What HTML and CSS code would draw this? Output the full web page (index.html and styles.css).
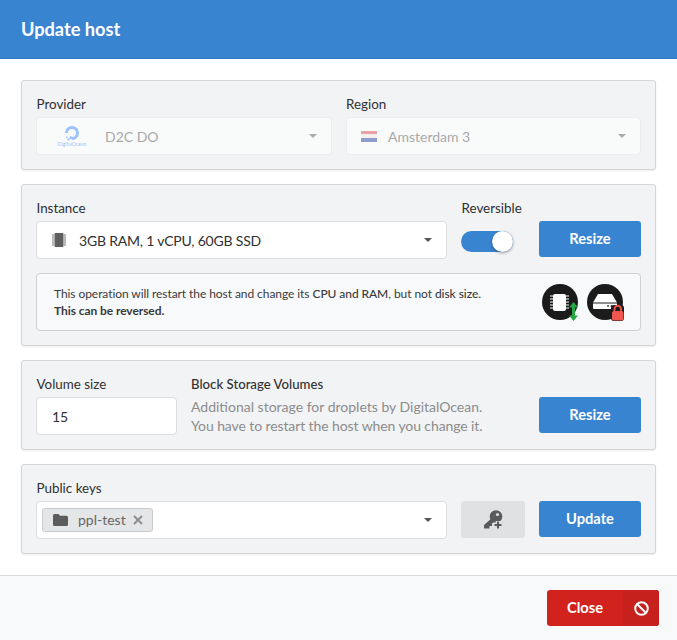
FILE: index.html
```html
<!DOCTYPE html>
<html lang="en">
<head>
    <meta charset="UTF-8">
    <meta name="viewport" content="width=device-width, initial-scale=1.0">
    <title>Update host</title>
    <link rel="stylesheet" href="styles.css">
</head>
<body>
    <header class="modal-header">
        <h1>Update host</h1>
    </header>
    <main class="modal-body">
        <section class="panel two-cols">
            <div class="field">
                <label>Provider</label>
                <div class="select disabled">
                    <span class="do-logo">
                        <svg width="16" height="16" viewBox="0 0 16 16"><path d="M8 15v-3a4 4 0 1 0-4-4H1a7 7 0 1 1 7 7z" fill="#3f8cff"/><rect x="5.500" y="11.500" width="2.500" height="2.500" fill="#3f8cff"/><rect x="3.500" y="13.500" width="2" height="2" fill="#3f8cff"/><rect x="2" y="11.500" width="1.500" height="1.500" fill="#3f8cff"/></svg>
                        <small>DigitalOcean</small>
                    </span>
                    <span class="select-text">D2C DO</span>
                    <span class="caret"></span>
                </div>
            </div>
            <div class="field">
                <label class="flush">Region</label>
                <div class="select disabled">
                    <span class="flag"><i class="red"></i><i class="white"></i><i class="blue"></i></span>
                    <span class="select-text">Amsterdam 3</span>
                    <span class="caret"></span>
                </div>
            </div>
        </section>

        <section class="panel">
            <div class="row">
                <div class="field grow">
                    <label>Instance</label>
                    <div class="select">
                        <svg class="chip" width="16" height="16" viewBox="0 0 16 16"><rect x="3.500" y="1" width="9" height="14" rx="1" fill="#5f5f5f"/><path d="M1 3h2M1 5h2M1 7h2M1 9h2M1 11h2M1 13h2M13 3h2M13 5h2M13 7h2M13 9h2M13 11h2M13 13h2" stroke="#777" stroke-width="1"/></svg>
                        <span class="select-text tight">3GB RAM, 1 vCPU, 60GB SSD</span>
                        <span class="caret"></span>
                    </div>
                </div>
                <div class="field toggle-field">
                    <label>Reversible</label>
                    <div class="toggle"><span class="knob"></span></div>
                </div>
                <button class="btn">Resize</button>
            </div>
            <div class="notice">
                <p>This operation will restart the host and change its <b class="medium">CPU and RAM</b>, but not <b class="medium">disk size</b>.<br><b>This can be reversed.</b></p>
                <div class="notice-icons">
                    <svg width="37" height="37" viewBox="0 0 37 37">
                        <circle cx="18" cy="18" r="18" fill="#1b1b1b"/>
                        <rect x="11" y="10" width="13" height="17" rx="2" fill="#fff"/>
                        <path d="M8 12h3M8 15h3M8 18h3M8 21h3M8 24h3M24 12h3M24 15h3M24 18h3M24 21h3M24 24h3" stroke="#fff" stroke-width="1.200"/>
                        <path d="M31.500 18l4.500 5.500h-3v8h3l-4.500 5.500-4.500-5.500h3v-8h-3z" fill="#27a844"/>
                    </svg>
                    <svg width="37" height="37" viewBox="0 0 37 37">
                        <circle cx="18" cy="18" r="18" fill="#1b1b1b"/>
                        <path d="M11 10h14l5 8.500H6z" fill="#fff"/>
                        <path d="M6 19.500h24V24a1 1 0 0 1-1 1H7a1 1 0 0 1-1-1z" fill="#fff"/>
                        <circle cx="21" cy="22" r=".9" fill="#333"/>
                        <circle cx="24.500" cy="22" r=".9" fill="#333"/>
                        <rect x="24" y="21" width="13" height="16" rx="3" fill="#1b1b1b"/>
                        <rect x="25" y="27" width="11.500" height="9.500" rx="2" fill="#f0554e"/>
                        <path d="M27.500 27.500v-2.500a3.200 3.200 0 0 1 6.500 0v2.500" fill="none" stroke="#f0554e" stroke-width="1.800"/>
                    </svg>
                </div>
            </div>
        </section>

        <section class="panel">
            <div class="row">
                <div class="field volume-field">
                    <label>Volume size</label>
                    <input class="input" type="text" value="15">
                </div>
                <div class="volume-info">
                    <h2>Block Storage Volumes</h2>
                    <p>Additional storage for droplets by DigitalOcean.<br><span class="tighter">You have to restart the host when you change it.</span></p>
                </div>
                <button class="btn">Resize</button>
            </div>
        </section>

        <section class="panel">
            <div class="row">
                <div class="field grow">
                    <label>Public keys</label>
                    <div class="select tags">
                        <span class="tag">
                            <svg width="15" height="12" viewBox="0 0 15 12"><path d="M1.500 0h4l1.500 1.800h6.500A1.500 1.500 0 0 1 15 3.300v7.200a1.500 1.500 0 0 1-1.500 1.500h-12A1.500 1.500 0 0 1 0 10.500v-9A1.500 1.500 0 0 1 1.500 0z" fill="#5c5c5c"/></svg>
                            <span class="tag-text">ppl-test</span>
                            <svg class="tag-x" width="10" height="10" viewBox="0 0 10 10"><path d="M1 1l8 8M9 1l-8 8" stroke="#8e8e8e" stroke-width="2"/></svg>
                        </span>
                        <span class="caret"></span>
                    </div>
                </div>
                <button class="btn-key" aria-label="Add key">
                    <svg width="20" height="20" viewBox="0 0 20 20">
                        <circle cx="13" cy="6.500" r="6.300" fill="#5a5a5a"/>
                        <path d="M9 8L1 15v3.500h5.500V16h2.500v-2.500L12 11z" fill="#5a5a5a"/>
                        <circle cx="14.500" cy="4.500" r="1.600" fill="#e0e1e3"/>
                        <path d="M15 11v8M11 15h8" stroke="#e0e1e3" stroke-width="4.500"/>
                        <path d="M15 11.500v7M11.500 15h7" stroke="#5a5a5a" stroke-width="2"/>
                    </svg>
                </button>
                <button class="btn">Update</button>
            </div>
        </section>
    </main>
    <footer class="modal-footer">
        <button class="btn-close">
            <span class="close-label">Close</span>
            <span class="close-icon">
                <svg width="15" height="15" viewBox="0 0 15 15"><circle cx="7.500" cy="7.500" r="6.300" fill="none" stroke="#fff" stroke-width="2"/><path d="M3 3l9 9" stroke="#fff" stroke-width="2"/></svg>
            </span>
        </button>
    </footer>
</body>
</html>
```

FILE: styles.css
```css
* {
    box-sizing: border-box;
}

html, body {
    height: 100%;
}

body {
    margin: 0;
    font-family: Lato, sans-serif;
    font-size: 14px;
    color: #303030;
    background-color: #fff;
    display: flex;
    flex-direction: column;
    overflow: hidden;
}

.modal-header {
    height: 59px;
    flex-shrink: 0;
    padding: 0 21px;
    display: flex;
    align-items: center;
    background-color: #3884d0;
    border-bottom: 1px solid #3278bf;
}

.modal-header h1 {
    margin: 0;
    font-size: 18.200px;
    font-weight: 700;
    color: #fff;
}

.modal-body {
    flex: 1;
    padding: 21px 21px 0;
    display: flex;
    flex-direction: column;
    gap: 14px;
}

.panel {
    padding: 14px;
    background-color: #f2f3f5;
    border: 1px solid #d4d5d7;
    border-radius: 3px;
    box-shadow: 0 1px 2px rgba(0, 0, 0, 0.08);
}

.two-cols {
    display: grid;
    grid-template-columns: 296px 295px;
    gap: 14px;
    height: 90px;
}

.row {
    display: flex;
    align-items: flex-start;
    gap: 14px;
}

.field {
    display: flex;
    flex-direction: column;
}

.grow {
    flex: 1;
}

label {
    display: block;
    height: 22px;
    padding-left: 0.5px;
    line-height: 18px;
    font-size: 13.400px;
    color: #303030;
}

label.flush {
    padding-left: 0;
}

.select {
    height: 38px;
    padding: 0 14px;
    display: flex;
    align-items: center;
    background-color: #fff;
    border: 1px solid #dcdde0;
    border-radius: 4px;
}

.select.disabled {
    background-color: #f9fafa;
    border-color: #ecedee;
    color: #a9a9a9;
}

.select-text {
    flex: 1;
}

.tight {
    letter-spacing: -0.2px;
}

.tighter {
    letter-spacing: -0.1px;
}

.caret {
    width: 0;
    height: 0;
    border-left: 4px solid transparent;
    border-right: 4px solid transparent;
    border-top: 4px solid #555;
}

.disabled .caret {
    border-top-color: #aaa;
}

.do-logo {
    width: 42px;
    margin-right: 12px;
    display: flex;
    flex-direction: column;
    align-items: center;
    opacity: 0.5;
}

.do-logo small {
    font-size: 5px;
    line-height: 6px;
    color: #3f8cff;
}

.flag {
    width: 16px;
    height: 11px;
    margin-right: 11px;
    display: flex;
    flex-direction: column;
}

.flag i {
    flex: 1;
}

.flag .red {
    background-color: #eda1a6;
}

.flag .white {
    background-color: #f4efef;
}

.flag .blue {
    background-color: #8d9cc8;
}

.chip {
    margin-right: 12px;
}

.toggle-field {
    width: 64px;
}

.toggle {
    position: relative;
    width: 52px;
    height: 21px;
    margin-top: 10px;
    background-color: #3884d0;
    border-radius: 11px;
}

.knob {
    position: absolute;
    top: 0;
    right: 0;
    width: 21px;
    height: 21px;
    background-color: #fff;
    border-radius: 50%;
    box-shadow: 0 1px 3px rgba(0, 0, 0, 0.4);
}

.btn {
    width: 102px;
    height: 36px;
    margin-top: 22px;
    padding: 0 0 2px;
    border: 0;
    border-radius: 3px;
    background-color: #3884d0;
    color: #fff;
    font-family: inherit;
    font-size: 14.700px;
    font-weight: 700;
}

.notice {
    height: 58px;
    margin-top: 14px;
    padding: 0 17px;
    display: flex;
    align-items: center;
    justify-content: space-between;
    background-color: #f8f9fa;
    border: 1px solid #cfd0d2;
    border-radius: 4px;
}

.notice p {
    margin: 0;
    font-size: 12px;
    line-height: 17px;
    letter-spacing: -0.07px;
    color: #3a3a3a;
}

.medium {
    font-weight: 500;
}

.notice-icons {
    display: flex;
    gap: 8px;
    margin-right: -1px;
}

.volume-field {
    width: 141px;
}

.input {
    width: 100%;
    height: 38px;
    padding: 0 15px;
    background-color: #fff;
    border: 1px solid #dcdde0;
    border-radius: 4px;
    font-family: inherit;
    font-size: 14px;
    color: #303030;
}

.volume-info {
    flex: 1;
}

.volume-info h2 {
    margin: 0;
    height: 22px;
    line-height: 18px;
    font-size: 13.200px;
    font-weight: 500;
    color: #303030;
}

.volume-info p {
    margin: 0;
    font-size: 14px;
    line-height: 19px;
    color: #8c8c8c;
}

.tags {
    padding-left: 5px;
}

.tags .caret {
    margin-left: auto;
}

.tag {
    height: 24px;
    padding: 0 9px 0 10px;
    display: flex;
    align-items: center;
    background-color: #e5e6e8;
    border: 1px solid #c9cacc;
    border-radius: 3px;
}

.tag-text {
    margin: 0 7px 1px 10px;
    font-size: 14px;
    color: #666;
}

.btn-key {
    width: 64px;
    height: 37px;
    margin-top: 22px;
    display: flex;
    align-items: center;
    justify-content: center;
    border: 0;
    border-radius: 3px;
    background-color: #e0e1e3;
}

.modal-footer {
    height: 65px;
    flex-shrink: 0;
    padding: 14px 18px 0;
    display: flex;
    justify-content: flex-end;
    align-items: flex-start;
    background-color: #f8f9fb;
    border-top: 1px solid #d9dadc;
}

.btn-close {
    width: 112px;
    height: 36px;
    padding: 0;
    display: flex;
    border: 0;
    border-radius: 3px;
    overflow: hidden;
    background-color: #d2221e;
    color: #fff;
    font-family: inherit;
    font-size: 14.700px;
    font-weight: 700;
}

.close-label {
    flex: 1;
    line-height: 34px;
    text-align: center;
}

.close-icon {
    width: 36px;
    display: flex;
    align-items: center;
    justify-content: center;
    background-color: #c6211d;
}
```
